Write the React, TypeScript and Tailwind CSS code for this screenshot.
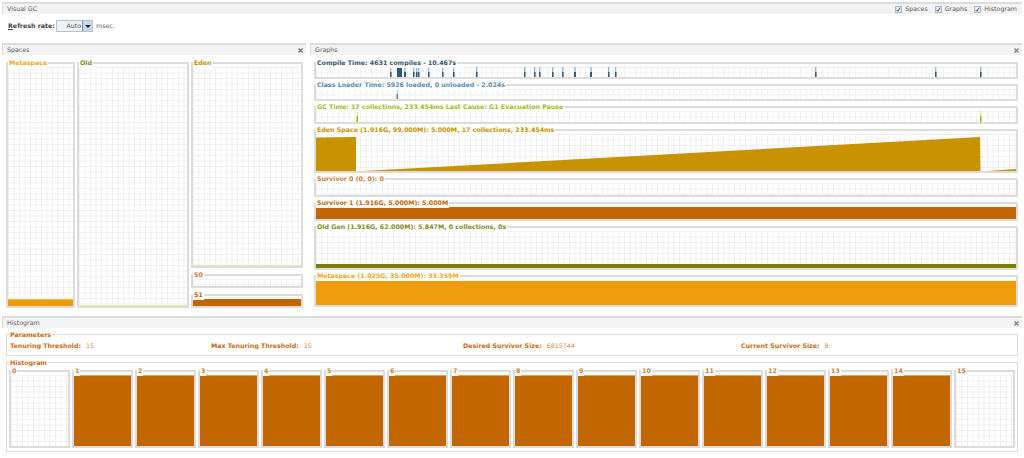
import { ReactNode } from "react";

const gridBg =
  "bg-[linear-gradient(#f0f0f0_1px,transparent_1px),linear-gradient(90deg,#f0f0f0_1px,transparent_1px)] bg-[size:5.5px_5.5px]";

const compileSpikes = [
  [74, 1.5], [81, 5], [88, 2], [97, 1.5], [100, 1.5], [102, 1.5], [112, 1.5], [126, 1.5], [137, 1.5],
  [160, 1.5], [208, 1.5], [218, 1.5], [223, 1.5], [236, 1.5], [246, 1.5], [258, 2], [274, 2], [292, 1.5],
  [299, 1.5], [499, 1.5], [619, 1.5], [664, 1.5],
];

function Spikes({ spikes, color, faded, height }: { spikes: number[][]; color: string; faded: string; height: number }) {
  return (
    <svg width="700" height={height} viewBox={`0 0 700 ${height}`} className="block">
      {spikes.map(([x, w]) => (
        <g key={x}>
          <rect x={x + w / 2 - 0.5} y={0} width={1} height={height} fill={faded} />
          <rect x={x} y={w > 2 ? 0 : height / 2} width={w} height={w > 2 ? height : height / 2} fill={color} />
        </g>
      ))}
    </svg>
  );
}

function SectionHeader({ title, close }: { title: string; close?: boolean }) {
  return (
    <div className="flex h-[12px] items-center justify-between border-t-2 border-l border-[#dcdcdc] bg-[#f3f3f3] pl-[4px] pr-[2px] text-[#5a5a5a]">
      <span>{title}</span>
      {close && (
        <svg width="5" height="5" viewBox="0 0 5 5" className="mr-[1px] shrink-0">
          <path d="M0.5 0.5L4.5 4.5M4.5 0.5L0.5 4.5" stroke="#777" strokeWidth="1.2" />
        </svg>
      )}
    </div>
  );
}

function Check({ label }: { label: string }) {
  return (
    <div className="flex items-center gap-[3px]">
      <span className="flex h-[7px] w-[7px] items-center justify-center border border-[#a9b8c8] bg-[#e6edf5]">
        <svg width="5" height="5" viewBox="0 0 5 5">
          <path d="M0.8 3L1.8 4.2L4.2 0.8" fill="none" stroke="#2f4f6a" strokeWidth="1" />
        </svg>
      </span>
      <span className="text-[#5a5a5a]">{label}</span>
    </div>
  );
}

function Box({
  title,
  color,
  className,
  children,
}: {
  title: string;
  color: string;
  className: string;
  children?: ReactNode;
}) {
  return (
    <div className={`relative flex flex-col border-2 border-[#dcdcdc] pt-[3px] ${className}`}>
      <span className={`absolute -top-[6px] left-[0px] bg-white px-[1px] leading-[10px] font-bold whitespace-nowrap ${color}`}>
        {title}
      </span>
      {children}
    </div>
  );
}

function Plot({ fill, height }: { fill?: string; height?: string }) {
  return (
    <div className={`flex flex-1 flex-col justify-end ${gridBg}`}>
      {fill && <div className={`${fill} ${height}`} />}
    </div>
  );
}

function Spaces() {
  return (
    <div className="w-[304px]">
      <SectionHeader title="Spaces" close />
      <div className="flex gap-[2px] pt-[7px] pl-[4px]">
        <Box title="Metaspace" color="text-[#f0a81e]" className="h-[246px] w-[69px]">
          <Plot fill="bg-[#ee9c0a] border-t border-[#f5c030]" height="h-[7px]" />
        </Box>
        <Box title="Old" color="text-[#858a20]" className="h-[246px] w-[112px]">
          <Plot fill="bg-[#f0e6a0]" height="h-[1px]" />
        </Box>
        <div className="flex w-[112px] flex-col gap-[6px]">
          <Box title="Eden" color="text-[#c89200]" className="h-[206px]">
            <Plot fill="bg-[#f3e29a]" height="h-[1px]" />
          </Box>
          <Box title="S0" color="text-[#c87d3a]" className="h-[14px]">
            <Plot />
          </Box>
          <Box title="S1" color="text-[#c26600]" className="h-[14px]">
            <Plot fill="bg-[#c26600]" height="h-[7px]" />
          </Box>
        </div>
      </div>
    </div>
  );
}

function Graphs() {
  return (
    <div className="flex-1">
      <SectionHeader title="Graphs" close />
      <div className="flex flex-col gap-[5px] px-[4px] pt-[7px]">
        <Box title="Compile Time: 4631 compiles - 10.467s" color="text-[#34566f]" className="h-[17px]">
          <div className={`flex-1 ${gridBg}`}>
            <Spikes spikes={compileSpikes} color="#2f5a78" faded="#7f9bb0" height={10} />
          </div>
        </Box>
        <Box title="Class Loader Time: 5926 loaded, 0 unloaded - 2.024s" color="text-[#5a8cb0]" className="h-[17px]">
          <div className={`flex-1 ${gridBg}`}>
            <Spikes spikes={[[80.5, 1.5]]} color="#4f88ae" faded="#a7c3d6" height={10} />
          </div>
        </Box>
        <Box title="GC Time: 17 collections, 233.454ms Last Cause: G1 Evacuation Pause" color="text-[#a3bb1c]" className="h-[18px]">
          <div className={`flex-1 ${gridBg}`}>
            <Spikes spikes={[[40.5, 1.5], [664, 1.5]]} color="#a0b800" faded="#cbd97a" height={11} />
          </div>
        </Box>
        <Box title="Eden Space (1.916G, 99.000M): 5.000M, 17 collections, 233.454ms" color="text-[#c89200]" className="h-[44px]">
          <div className={`flex-1 ${gridBg}`}>
            <svg width="700" height="37" viewBox="0 0 700 37" className="block">
              <polygon points="0,37 0,3.5 40,3 40,37" fill="#c89200" />
              <polygon points="47,37 664,3 664.5,37" fill="#c89200" />
              <polygon points="671,37 700,35 700,37" fill="#c89200" />
            </svg>
          </div>
        </Box>
        <Box title="Survivor 0 (0, 0): 0" color="text-[#c87d3a]" className="h-[19px]">
          <Plot />
        </Box>
        <Box title="Survivor 1 (1.916G, 5.000M): 5.000M" color="text-[#c26600]" className="h-[19px]">
          <Plot fill="bg-[#c26600]" height="h-[12px]" />
        </Box>
        <Box title="Old Gen (1.916G, 62.000M): 5.847M, 0 collections, 0s" color="text-[#858a20]" className="h-[44px]">
          <Plot fill="bg-[#7e7e00]" height="h-[4px]" />
        </Box>
        <Box title="Metaspace (1.025G, 35.000M): 33.359M" color="text-[#f0a81e]" className="h-[32px]">
          <Plot fill="bg-[#ee9c0a]" height="h-[24px]" />
        </Box>
      </div>
    </div>
  );
}

function Param({ label, value, className }: { label: string; value: string; className: string }) {
  return (
    <div className={`flex gap-[5px] whitespace-nowrap ${className}`}>
      <span className="font-bold text-[#c86a10]">{label}</span>
      <span className="text-[#d08a45]">{value}</span>
    </div>
  );
}

function Histogram() {
  return (
    <div>
      <SectionHeader title="Histogram" close />
      <div className="flex flex-col gap-[6px] px-[4px] pt-[6px]">
        <div className="relative flex h-[22px] items-center border border-[#dcdcdc] pt-[2px] pl-[3px]">
          <span className="absolute -top-[5px] left-[2px] bg-white px-[1px] leading-[10px] font-bold text-[#c86a10]">
            Parameters
          </span>
          <Param label="Tenuring Threshold:" value="15" className="w-[201px]" />
          <Param label="Max Tenuring Threshold:" value="15" className="w-[252px]" />
          <Param label="Desired Survivor Size:" value="6815744" className="w-[278px]" />
          <Param label="Current Survivor Size:" value="8" className="" />
        </div>
        <div className="relative flex h-[90px] gap-[2px] border border-[#dcdcdc] px-[2px] pt-[7px]">
          <span className="absolute -top-[5px] left-[2px] bg-white px-[1px] leading-[10px] font-bold text-[#c86a10]">
            Histogram
          </span>
          {Array.from({ length: 16 }, (_, i) => (
            <Box key={i} title={String(i)} color="text-[#c87d3a]" className="h-[78px] w-[61px]">
              {i === 0 || i === 15 ? (
                <Plot />
              ) : (
                <Plot fill="bg-[#c26600] border-t border-[#e8a050]" height="h-full" />
              )}
            </Box>
          ))}
        </div>
      </div>
    </div>
  );
}

export default function App() {
  return (
    <div className="h-[458px] w-[1024px] overflow-hidden bg-white px-[2px] pt-[2px] font-['DejaVu_Sans',sans-serif] text-[6.3px] leading-[10px]">
      <div className="flex h-[12px] items-center justify-between border-t-2 border-l border-[#dcdcdc] bg-[#f3f3f3] pr-[5px] pl-[4px] text-[#5a5a5a]">
        <span>Visual GC</span>
        <div className="flex gap-[7px]">
          <Check label="Spaces" />
          <Check label="Graphs" />
          <Check label="Histogram" />
        </div>
      </div>
      <div className="flex h-[29px] items-start pt-[6px] pl-[6px]">
        <span className="w-[48px] pt-[1px] font-bold whitespace-nowrap text-[#444]">
          <span className="underline">R</span>efresh rate:
        </span>
        <div className="flex h-[12px] w-[37px] border border-[#b4c2d2] bg-[#eef2f7]">
          <span className="flex-1 pr-[1px] text-right text-[#555]">Auto</span>
          <span className="flex w-[10px] items-center justify-center border-l border-[#7d97b3] bg-[#c9d9ea]">
            <span className="h-0 w-0 border-x-[3px] border-t-[3px] border-x-transparent border-t-[#222]" />
          </span>
        </div>
        <span className="pt-[1px] pl-[3px] text-[#666]">msec.</span>
      </div>
      <div className="flex h-[273px] gap-[4px]">
        <Spaces />
        <Graphs />
      </div>
      <Histogram />
    </div>
  );
}
